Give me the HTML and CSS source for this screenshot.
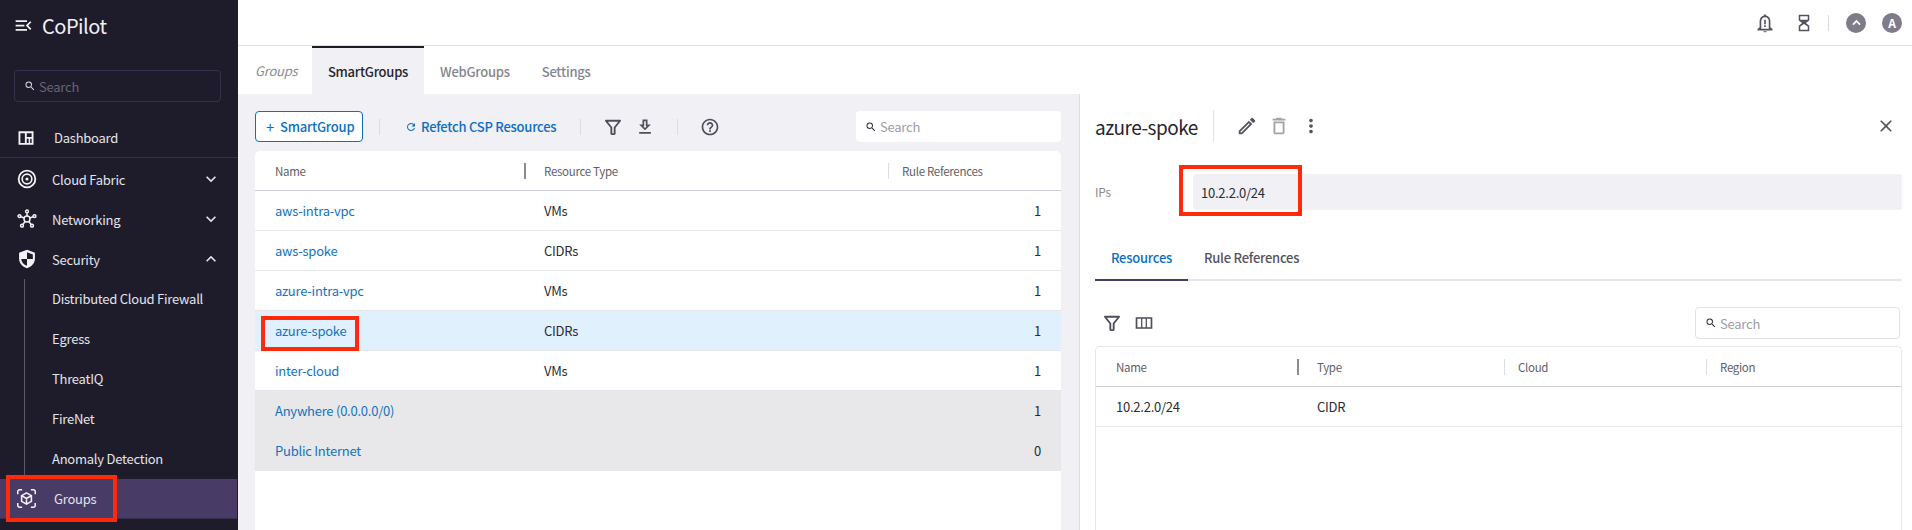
FILE: index.html
```html
<!DOCTYPE html>
<html lang="en">
<head>
  <meta charset="UTF-8" />
  <title>CoPilot - Groups</title>
  <link rel="stylesheet" href="styles.css">
</head>
<body>
  <svg class="sprite" xmlns="http://www.w3.org/2000/svg">
    <symbol id="i-search" viewBox="0 0 24 24"><path d="M15.5 14h-.79l-.28-.27A6.471 6.471 0 0 0 16 9.5 6.5 6.5 0 1 0 9.5 16c1.61 0 3.09-.59 4.23-1.57l.27.28v.79l5 4.99L20.49 19l-4.99-5zm-6 0C7.01 14 5 11.99 5 9.5S7.01 5 9.5 5 14 7.01 14 9.5 11.99 14 9.5 14z"/></symbol>
    <symbol id="i-down" viewBox="0 0 24 24"><path d="M16.59 8.59L12 13.17 7.41 8.59 6 10l6 6 6-6z"/></symbol>
    <symbol id="i-up" viewBox="0 0 24 24"><path d="M12 8l-6 6 1.41 1.41L12 10.83l4.59 4.58L18 14z"/></symbol>
    <symbol id="i-filter" viewBox="0 0 24 24"><path d="M3.5 4.5h17L14 12.6V20l-1 .5h-2l-1-.5v-7.4z" fill="none" stroke="currentColor" stroke-width="2.2" stroke-linejoin="round"/></symbol>
  </svg>

  <div class="app">
    <!-- left nav -->
    <aside class="sidebar">
      <div class="brand">
        <svg class="brand-icon" viewBox="0 0 24 24"><path d="M3 18h13v-2H3v2zm0-5h10v-2H3v2zm0-7v2h13V6H3zm18 9.59L17.42 12 21 8.41 19.59 7l-5 5 5 5L21 15.59z"/></svg>
        <span>CoPilot</span>
      </div>
      <div class="side-search">
        <svg class="ico-sm"><use href="#i-search"/></svg>
        <span>Search</span>
      </div>

      <div class="nav-item nav-first">
        <svg class="nav-icon" viewBox="0 0 24 24"><path d="M2 3h20v18H2zM4.500 5.500v13h6v-13zM13 5.500v5h6.500v-5zM13 13v5.500h2.500V13zM17.500 13v5.500h2V13z" fill-rule="evenodd"/></svg>
        <span class="nav-label-wide">Dashboard</span>
      </div>
      <div class="nav-item">
        <svg class="nav-icon line" viewBox="0 0 24 24" stroke="currentColor"><circle cx="12" cy="12" r="10" stroke-width="2.2"/><circle cx="12" cy="12" r="5.800" stroke-width="2"/><circle cx="12" cy="12" r="1.900" class="solid"/></svg>
        <span class="nav-label">Cloud Fabric</span>
        <svg class="chev"><use href="#i-down"/></svg>
      </div>
      <div class="nav-item">
        <svg class="nav-icon line" viewBox="0 0 24 24" stroke="currentColor" stroke-width="1.800"><circle cx="12" cy="12" r="3.600"/><circle cx="12" cy="3" r="1.700"/><circle cx="3" cy="8.500" r="1.700"/><circle cx="21" cy="8.500" r="1.700"/><circle cx="6" cy="20" r="1.700"/><circle cx="18" cy="20" r="1.700"/><path d="M12 5v3.400M4.700 9.300l4.100 1.400M19.300 9.300l-4.100 1.400M7 18.500l2.800-3.500M17 18.500l-2.800-3.500"/></svg>
        <span class="nav-label">Networking</span>
        <svg class="chev"><use href="#i-down"/></svg>
      </div>
      <div class="nav-item">
        <svg class="nav-icon" viewBox="0 0 24 24"><path d="M12 1l9.500 3.500v7c0 5.500-3.900 9.900-9.500 11.500C6.400 21.400 2.500 17 2.500 11.500v-7zM12 4v8H5c.4 3.900 3.100 6.900 7 8.200V12h7V6.600z" fill-rule="evenodd"/></svg>
        <span class="nav-label">Security</span>
        <svg class="chev"><use href="#i-up"/></svg>
      </div>
      <div class="subnav">
        <div class="sub-item">Distributed Cloud Firewall</div>
        <div class="sub-item">Egress</div>
        <div class="sub-item">ThreatIQ</div>
        <div class="sub-item">FireNet</div>
        <div class="sub-item">Anomaly Detection</div>
      </div>
      <div class="nav-item nav-active">
        <svg class="nav-icon nav-icon-lg line" viewBox="0 0 24 24" stroke="currentColor" stroke-width="1.700"><path d="M2 7V3.500L3.500 2H7M17 2h3.500L22 3.500V7M22 17v3.500L20.500 22H17M7 22H3.500L2 20.500V17"/><path d="M12 5.500l5.600 3.200v6.600L12 18.500l-5.600-3.200V8.700zM6.400 8.700L12 12l5.600-3.300M12 12v6.500" stroke-width="1.800"/></svg>
        <span class="nav-label-wide">Groups</span>
        <i class="mark mark-groups"></i>
      </div>
    </aside>

    <div class="main">
      <header class="topbar">
        <svg class="top-icon" viewBox="0 0 24 24"><path d="M12 1l1.300 2.100C16.600 3.800 18.500 6.500 18.500 10v7l2.500 2.200V21H3v-1.800L5.500 17v-7c0-3.500 1.900-6.200 5.200-6.900zM12 5c-3 0-4.500 2.200-4.500 5v9h9v-9c0-2.800-1.500-5-4.500-5zM11 8h2v5.500h-2zM11 14.800h2v2h-2zM10 22h4c0 .8-1 1.200-2 1.200S10 22.800 10 22z" fill-rule="evenodd"/></svg>
        <svg class="top-icon hourglass" viewBox="0 0 16 24"><path d="M1 1h14v7.500L10.500 12l4.500 3.500V23H1v-7.500L5.500 12 1 8.500zM3 3v4.500h10V3zM8 13.300L3 16.700V21h10v-4.300z" fill-rule="evenodd"/></svg>
        <span class="top-sep"></span>
        <span class="avatar"><svg viewBox="0 0 24 24"><path d="M12 6l-9 9 2.800 2.800L12 11.600l6.200 6.200L21 15z"/></svg></span>
        <span class="avatar">A</span>
      </header>

      <nav class="tabs">
        <span class="tabs-title">Groups</span>
        <span class="tab tab-on">SmartGroups</span>
        <span class="tab">WebGroups</span>
        <span class="tab">Settings</span>
      </nav>

      <div class="split">
        <section class="list-pane">
          <div class="toolbar">
            <button class="btn-outline"><span class="plus">+</span>SmartGroup</button>
            <span class="tool-sep sep-a"></span>
            <span class="link-btn">
              <svg class="ico-xs" viewBox="0 0 24 24"><path d="M17.650 6.350C16.200 4.900 14.210 4 12 4c-4.420 0-7.990 3.580-7.990 8s3.570 8 7.990 8c3.730 0 6.840-2.550 7.730-6h-2.080c-.82 2.330-3.040 4-5.650 4-3.310 0-6-2.690-6-6s2.690-6 6-6c1.660 0 3.140.69 4.220 1.780L13 11h7V4l-2.350 2.350z"/></svg>
              Refetch CSP Resources
            </span>
            <span class="tool-sep"></span>
            <svg class="tool-icon tool-filter"><use href="#i-filter"/></svg>
            <svg class="tool-icon tool-down" viewBox="0 0 24 24"><path d="M19 9h-4V3H9v6H5l7 7 7-7zm-8 2V5h2v6h1.170L12 13.170 9.830 11H11zm-6 7h14v2H5z"/></svg>
            <span class="tool-sep"></span>
            <svg class="tool-icon tool-help" viewBox="0 0 24 24"><path d="M11 18h2v-2h-2v2zm1-16C6.480 2 2 6.480 2 12s4.480 10 10 10 10-4.480 10-10S17.520 2 12 2zm0 18c-4.410 0-8-3.590-8-8s3.590-8 8-8 8 3.590 8 8-3.590 8-8 8zm0-14c-2.210 0-4 1.790-4 4h2c0-1.100.9-2 2-2s2 .9 2 2c0 2-3 1.750-3 5h2c0-2.250 3-2.500 3-5 0-2.210-1.790-4-4-4z"/></svg>
            <div class="search-box list-search">
              <svg class="ico-sm"><use href="#i-search"/></svg>
              <span>Search</span>
            </div>
          </div>

          <div class="grid-card">
            <div class="row row-head">
              <div class="cell">Name</div>
              <div class="cell cell-split dark">Resource Type</div>
              <div class="cell cell-split">Rule References</div>
            </div>
            <div class="row"><div class="cell name">aws-intra-vpc</div><div class="cell">VMs</div><div class="cell num">1</div></div>
            <div class="row"><div class="cell name">aws-spoke</div><div class="cell">CIDRs</div><div class="cell num">1</div></div>
            <div class="row"><div class="cell name">azure-intra-vpc</div><div class="cell">VMs</div><div class="cell num">1</div></div>
            <div class="row row-sel"><div class="cell name">azure-spoke<i class="mark mark-name"></i></div><div class="cell">CIDRs</div><div class="cell num">1</div></div>
            <div class="row"><div class="cell name">inter-cloud</div><div class="cell">VMs</div><div class="cell num">1</div></div>
            <div class="row row-sys"><div class="cell name">Anywhere (0.0.0.0/0)</div><div class="cell"></div><div class="cell num">1</div></div>
            <div class="row row-sys"><div class="cell name">Public Internet</div><div class="cell"></div><div class="cell num">0</div></div>
          </div>
        </section>

        <section class="detail-pane">
          <div class="detail-head">
            <h2>azure-spoke</h2>
            <span class="head-sep"></span>
            <svg class="act" viewBox="0 0 24 24"><path d="M3 17.250V21h3.750L17.810 9.940l-3.750-3.750L3 17.250zM5.920 19H5v-.92l9.060-9.060.92.92L5.920 19zM20.710 7.040c.39-.39.39-1.020 0-1.410l-2.340-2.340a.9959.9959 0 0 0-1.410 0l-1.830 1.830 3.750 3.750 1.830-1.830z"/></svg>
            <svg class="act act-off" viewBox="0 0 24 24"><path d="M6 19c0 1.100.9 2 2 2h8c1.100 0 2-.9 2-2V7H6v12zM8 9h8v10H8V9zm7.500-5l-1-1h-5l-1 1H5v2h14V4z"/></svg>
            <svg class="act" viewBox="0 0 24 24"><path d="M12 8c1.100 0 2-.9 2-2s-.9-2-2-2-2 .9-2 2 .9 2 2 2zm0 2c-1.100 0-2 .9-2 2s.9 2 2 2 2-.9 2-2-.9-2-2-2zm0 6c-1.100 0-2 .9-2 2s.9 2 2 2 2-.9 2-2-.9-2-2-2z"/></svg>
            <svg class="act act-close" viewBox="0 0 24 24"><path d="M19 6.410L17.590 5 12 10.590 6.410 5 5 6.410 10.590 12 5 17.590 6.410 19 12 13.410 17.590 19 19 17.590 13.410 12z"/></svg>
          </div>

          <div class="ip-line">
            <span class="ip-label">IPs</span>
            <div class="ip-field"><span class="ip-value">10.2.2.0/24</span><i class="mark mark-ip"></i></div>
          </div>

          <div class="detail-tabs">
            <span class="dtab dtab-on">Resources</span>
            <span class="dtab">Rule References</span>
          </div>

          <div class="detail-tools">
            <svg class="tool-icon"><use href="#i-filter"/></svg>
            <svg class="tool-icon" viewBox="0 0 24 24"><path d="M2 5h20v14H2zM4 7v10h4.500V7zM10 7v10h4V7zM15.500 7v10H20V7z" fill-rule="evenodd"/></svg>
            <div class="search-box detail-search">
              <svg class="ico-sm"><use href="#i-search"/></svg>
              <span>Search</span>
            </div>
          </div>

          <div class="grid-card detail-card">
            <div class="row row-head detail-row">
              <div class="cell">Name</div>
              <div class="cell cell-split dark">Type</div>
              <div class="cell cell-split">Cloud</div>
              <div class="cell cell-split">Region</div>
            </div>
            <div class="row detail-row">
              <div class="cell">10.2.2.0/24</div>
              <div class="cell">CIDR</div>
              <div class="cell"></div>
              <div class="cell"></div>
            </div>
          </div>
        </section>
      </div>
    </div>
  </div>
</body>
</html>
```

FILE: styles.css
```css
* {
  box-sizing: border-box;
}

html, body {
  height: 100%;
  margin: 0;
  overflow: hidden;
}

body {
  font-family: "Noto Sans CJK SC", "Noto Sans", sans-serif;
  font-size: 13px;
  letter-spacing: -0.24px;
  color: #2b2b33;
  background: #FFFFFF;
}

svg {
  fill: currentColor;
  flex: none;
}

svg.line {
  fill: none;
}

svg .solid {
  fill: currentColor;
  stroke: none;
}

.sprite {
  display: none;
}

.app {
  display: flex;
  height: 530px;
}

/* sidebar */
.sidebar {
  width: 238px;
  flex: none;
  background: #1e1c2b;
  color: #e4e3ea;
}

.brand {
  display: flex;
  align-items: center;
  gap: 8px;
  height: 54px;
  padding: 0 0 3px 13px;
  font-size: 20px;
  letter-spacing: -0.5px;
  color: #f1f1f4;
}

.brand-icon {
  width: 21px;
  height: 21px;
}

.side-search {
  display: flex;
  align-items: center;
  gap: 3px;
  height: 32px;
  margin: 16px 17px 0 14px;
  padding-left: 9px;
  border: 1px solid #34314a;
  border-radius: 4px;
  color: #66647a;
}

.side-search svg {
  color: #d8d8de;
}

.ico-sm {
  width: 12px;
  height: 12px;
}

.ico-xs {
  width: 12px;
  height: 12px;
}

.nav-item {
  display: flex;
  align-items: center;
  height: 40px;
  padding-left: 17px;
  position: relative;
}

.nav-first {
  height: 39px;
  margin-top: 16px;
  margin-bottom: 1px;
  border-bottom: 1px solid #33304a;
  box-sizing: content-box;
}

.nav-icon {
  width: 20px;
  height: 20px;
  color: #f2f2f5;
}

.nav-first .nav-icon {
  width: 18px;
  height: 18px;
}

.nav-label {
  margin-left: 15px;
}

.nav-label-wide {
  margin-left: 19px;
}

.chev {
  width: 20px;
  height: 20px;
  margin-left: auto;
  margin-right: 17px;
}

.subnav {
  margin-left: 24px;
  border-left: 1px solid #5a5868;
}

.sub-item {
  height: 40px;
  line-height: 40px;
  padding-left: 27px;
}

.nav-active {
  background: #483c66;
  border-bottom: 1px solid #38304f;
  width: 237px;
  padding-left: 16px;
}

.nav-active .nav-label-wide {
  margin-left: 17px;
}

.nav-icon-lg {
  width: 21px;
  height: 21px;
}

/* red annotation boxes from the screenshot */
.mark {
  position: absolute;
  border: 4px solid #ff2a0a;
  display: block;
  pointer-events: none;
}

.mark-groups {
  left: 6px;
  top: -4px;
  width: 111px;
  height: 47px;
}

.mark-name {
  left: 6px;
  top: -5px;
  width: 98px;
  height: 35px;
}

.mark-ip {
  left: -14px;
  top: -9px;
  width: 123px;
  height: 51px;
}

/* top bar */
.main {
  flex: 1;
  min-width: 0;
  display: flex;
  flex-direction: column;
}

.topbar {
  display: flex;
  align-items: center;
  justify-content: flex-end;
  height: 46px;
  padding-right: 10px;
  border-bottom: 1px solid #e2e2e4;
  color: #55535f;
}

.top-icon {
  width: 20px;
  height: 20px;
  margin-right: 23px;
}

.hourglass {
  width: 12px;
  height: 18px;
  margin-right: 18px;
}

.top-sep {
  width: 1px;
  height: 16px;
  background: #dcdce0;
  margin-right: 17px;
}

.avatar {
  display: flex;
  align-items: center;
  justify-content: center;
  width: 20px;
  height: 20px;
  margin-left: 16px;
  border-radius: 50%;
  background: #7e7c88;
  color: #FFFFFF;
  font-size: 12px;
  font-weight: 700;
}

.top-sep + .avatar {
  margin-left: 0;
}

.avatar svg {
  width: 11px;
  height: 11px;
}

.tabs {
  display: flex;
  align-items: center;
  height: 48px;
  flex: none;
}

.tabs-title {
  width: 74px;
  padding-left: 17px;
  font-style: italic;
  color: #8a8a92;
}

.tab {
  display: flex;
  align-items: center;
  justify-content: center;
  height: 48px;
  padding: 0 16px;
  font-weight: 500;
  color: #85858d;
  border-top: 2px solid transparent;
}

.tab-on {
  width: 112px;
  padding: 0;
  background: #f0f0f5;
  color: #26252f;
  border-top: 2px solid #1e1c2b;
}

/* split view */
.split {
  flex: 1;
  display: flex;
  min-height: 0;
}

.list-pane {
  width: 842px;
  flex: none;
  background: #f0f0f5;
  border-right: 1px solid #dddde2;
  padding: 17px 18px 0 17px;
  display: flex;
  flex-direction: column;
}

.toolbar {
  display: flex;
  align-items: center;
  height: 31px;
  margin-bottom: 9px;
}

.btn-outline {
  display: flex;
  align-items: center;
  height: 31px;
  width: 108px;
  padding: 0 0 0 10px;
  border: 1px solid #0b6fc2;
  border-radius: 4px;
  background: #FFFFFF;
  color: #0b6fc2;
  font: 500 13px "Noto Sans CJK SC", "Noto Sans", sans-serif;
  letter-spacing: -0.24px;
}

.plus {
  margin-right: 6px;
  font-size: 15px;
  font-weight: 400;
}

.tool-sep {
  width: 1px;
  height: 16px;
  background: #dcdce2;
}

.sep-a {
  margin: 0 25px 0 16px;
}

.link-btn {
  display: flex;
  align-items: center;
  gap: 4px;
  color: #0b6fc2;
  font-weight: 500;
  margin-right: 24px;
}

.tool-icon {
  width: 20px;
  height: 20px;
  color: #4e4d59;
}

.tool-filter {
  margin-left: 22px;
}

.tool-down {
  margin-left: 12px;
  margin-right: 22px;
}

.tool-help {
  margin-left: 22px;
}

.search-box {
  display: flex;
  align-items: center;
  gap: 3px;
  height: 31px;
  padding-left: 9px;
  background: #FFFFFF;
  border-radius: 4px;
  color: #9c9ca4;
}

.search-box svg {
  color: #33323c;
}

.list-search {
  width: 205px;
  margin-left: auto;
}

.grid-card {
  flex: 1;
  background: #FFFFFF;
  border-radius: 5px 5px 0 0;
  min-height: 0;
}

.row {
  display: grid;
  grid-template-columns: 269px 364px 1fr;
  height: 40px;
  align-items: center;
  border-bottom: 1px solid #e6e6ea;
}

.row-head {
  border-bottom: 1px solid #cfcfd9;
  color: #5f5e69;
  font-size: 11.5px;
  letter-spacing: -0.3px;
}

.cell {
  padding-left: 20px;
  position: relative;
  white-space: nowrap;
}

.cell-split::before {
  content: "";
  position: absolute;
  left: 0;
  top: 0;
  bottom: 0;
  width: 1px;
  background: #dedee2;
}

.dark::before {
  width: 2px;
  background: #8c8b94;
}

.cell-split {
  padding-left: 14px;
}

.dark {
  padding-left: 20px;
}

.name {
  color: #1473bd;
}

.num {
  text-align: right;
  padding-right: 20px;
}

.row-sel {
  background: #e0f0fd;
}

.row-sys {
  background: #e8e8ea;
}

/* detail panel */
.detail-pane {
  flex: 1;
  min-width: 0;
  padding: 0 10px 0 15px;
  display: flex;
  flex-direction: column;
}

.detail-head {
  display: flex;
  align-items: center;
  height: 32px;
  margin-top: 16px;
  color: #55535f;
}

.detail-head h2 {
  margin: 0;
  font-size: 19px;
  font-weight: 400;
  letter-spacing: -0.5px;
  color: #26252f;
}

.head-sep {
  width: 1px;
  height: 32px;
  background: #e2e2e6;
  margin: 0 22px 0 15px;
}

.act {
  width: 22px;
  height: 22px;
  margin-right: 10px;
}

.act-off {
  color: #a2a2a8;
}

.act-close {
  width: 20px;
  height: 20px;
  margin-left: auto;
  margin-right: 6px;
}

.ip-line {
  display: flex;
  align-items: center;
  margin-top: 32px;
}

.ip-label {
  width: 98px;
  padding-bottom: 2px;
  font-size: 12px;
  color: #8a8a92;
}

.ip-field {
  flex: 1;
  height: 36px;
  display: flex;
  align-items: center;
  padding-left: 8px;
  background: #f0f0f5;
  border-radius: 4px;
  position: relative;
}

.detail-tabs {
  display: flex;
  height: 49px;
  margin-top: 22px;
  border-bottom: 2px solid #e6e6ea;
}

.dtab {
  display: flex;
  align-items: center;
  justify-content: center;
  width: 93px;
  padding-top: 3px;
  margin-bottom: -2px;
  font-weight: 500;
  color: #55535f;
  border-bottom: 2px solid transparent;
}

.dtab + .dtab {
  width: auto;
  padding-left: 16px;
}

.dtab-on {
  color: #0b6fc2;
  border-bottom-color: #483c66;
}

.detail-tools {
  display: flex;
  align-items: center;
  gap: 12px;
  height: 32px;
  margin-top: 26px;
  padding-left: 7px;
}

.detail-search {
  width: 205px;
  margin-left: auto;
  margin-right: 2px;
  height: 32px;
  border: 1px solid #e2e2e6;
}

.detail-card {
  margin-top: 7px;
  border: 1px solid #e6e6ea;
  border-bottom: 0;
}

.detail-row {
  grid-template-columns: 201px 207px 202px 1fr;
}
```
